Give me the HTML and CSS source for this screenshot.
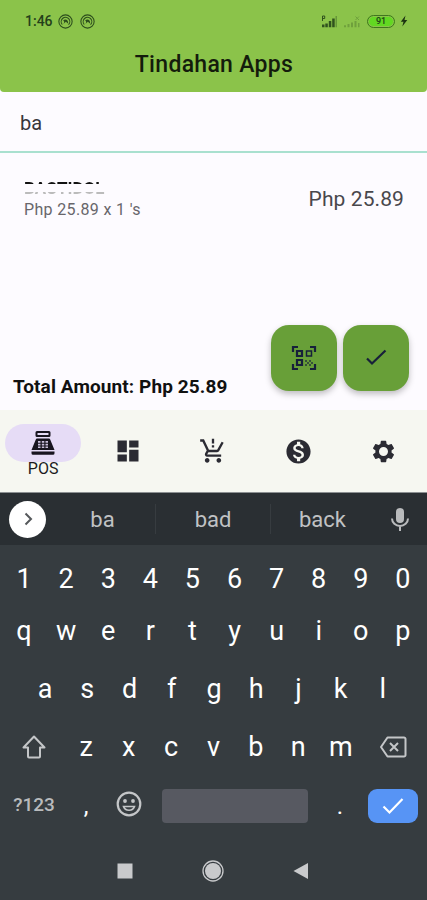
FILE: index.html
```html
<!DOCTYPE html>
<html lang="en">
<head>
  <meta charset="UTF-8" />
  <meta name="viewport" content="width=device-width, initial-scale=1.0"/>
  <title>Tindahan Apps</title>
  <link rel="stylesheet" href="styles.css">
</head>
<body>
  <header class="header">
    <div class="status">
      <span class="time">1:46</span>
      <svg class="swirl" viewBox="0 0 14 14"><circle cx="7" cy="7" r="6.2"/><path d="M4 9.800a4 4 0 1 1 5.800.200"/><path class="core" d="M4.800 6C7 4 9.800 5.500 9.400 8.800L7.300 7.200 5 9.300C6 8 6.200 7 4.800 6z"/></svg>
      <svg class="swirl" viewBox="0 0 14 14"><circle cx="7" cy="7" r="6.2"/><path d="M4 9.800a4 4 0 1 1 5.800.200"/><path class="core" d="M4.800 6C7 4 9.800 5.500 9.400 8.800L7.300 7.200 5 9.300C6 8 6.200 7 4.800 6z"/></svg>
      <div class="status-right">
        <svg class="signal" viewBox="0 0 17 13"><path d="M1 12.2V9.500h2.500v2.700zM4.300 12.200V8.500h2.500v3.700zM7.800 12.200V6h2.500v6.200zM11.200 12.200V3.500h2.500v8.700z"/><path class="faint" d="M14.500 12.200V1H16v11.200z"/><path class="roam" d="M1.500 6V1h2.200v2.500H1.500"/></svg>
        <svg class="signal weak" viewBox="0 0 17 13"><path d="M0 12.200v-2h2v2zM3.500 12.200V9h2v3.200zM7 12.200V7.500h2v4.700zM10.500 12.200V6h2v6.200zM14 12.200V8h1.500v4.200z"/><path class="roam" d="M11.500 1.500l3.500 3.500M15 1.500l-3.500 3.500"/></svg>
        <span class="battery">91</span>
        <svg class="bolt" viewBox="0 0 8 12"><path d="M5.500.5L.8 6.800h2.700L2.300 11.500 7.300 5H4.500z"/></svg>
      </div>
    </div>
    <h1 class="title">Tindahan Apps</h1>
  </header>

  <div class="search">ba</div>

  <main class="content">
    <div class="item">
      <div class="item-info">
        <div class="item-name">BACTIDOL</div>
        <div class="item-qty">Php 25.89 x 1 's</div>
      </div>
      <div class="item-price">Php 25.89</div>
    </div>
    <div class="footer">
      <div class="total">Total Amount: Php 25.89</div>
      <button class="fab">
        <svg width="26" height="26" viewBox="0 0 26 26" fill="none" stroke="#17203a" stroke-width="2.200">
          <path d="M2 7V2h5M19 2h5v5M24 19v5h-5M7 24H2v-5"/>
          <path d="M6 6h5v5H6zM6 15h5v5H6z"/>
          <path d="M15.500 6h5v5h-5z" stroke-width="1.500"/>
          <path d="M14 15h2v2h-2zM18 15h2v2h-2zM16 17h2v2h-2zM20 17h2v2h-2zM14 19h2v2h-2zM18 19h2v2h-2z" fill="#17203a" stroke="none" opacity=".6"/>
        </svg>
      </button>
      <button class="fab">
        <svg width="26" height="26" viewBox="0 0 26 26" fill="none" stroke="#17203a" stroke-width="2.200"><path d="M4 13.500l5 5L22.500 5.500"/></svg>
      </button>
    </div>
  </main>

  <nav class="tabs">
    <a class="tab active">
      <span class="pill">
        <svg width="24" height="26" viewBox="0 0 24 26"><path d="M6 1h12a1.500 1.500 0 0 1 1.500 1.500v3A1.500 1.500 0 0 1 18 7H6a1.500 1.500 0 0 1-1.500-1.500v-3A1.500 1.500 0 0 1 6 1zm.5 2v2h11V3zM6.500 8.500h11c1 0 1.500.5 1.800 1.300L23.500 20H.5L4.700 9.800c.3-.8.800-1.300 1.800-1.300zM.5 21.500h23v1.800a1.500 1.500 0 0 1-1.500 1.500H2a1.500 1.500 0 0 1-1.500-1.500z" fill="#18151f" fill-rule="evenodd"/><path d="M7 11h2.500v1.700H7zM10.800 11h2.500v1.700h-2.500zM14.500 11H17v1.700h-2.500zM7 13.800h2.500v1.700H7zM10.800 13.800h2.500v1.700h-2.500zM14.500 13.800H17v1.700h-2.500zM7 16.500h2.500v1.500H7zM10.800 16.500h2.500v1.500h-2.500zM14.500 16.500H17v1.500h-2.500z" fill="#c9c0dc"/></svg>
      </span>
      <span class="tab-label">POS</span>
    </a>
    <a class="tab"><svg width="28" height="28" viewBox="0 0 24 24"><path d="M3 13h8V3H3v10zm0 8h8v-6H3v6zm10 0h8V11h-8v10zm0-18v6h8V3h-8z"/></svg></a>
    <a class="tab"><svg width="28" height="28" viewBox="0 0 24 24"><path d="M11 9h2V7h-2v2zm0-3.500h2V1.500h-2v4zM7 18c-1.100 0-2 .9-2 2s.9 2 2 2 2-.9 2-2-.9-2-2-2zm10 0c-1.100 0-2 .9-2 2s.9 2 2 2 2-.9 2-2-.9-2-2-2zM8.100 13h7.450c.75 0 1.410-.41 1.750-1.030L21.160 4.960 19.420 4h-.01L15.550 11H8.530L4.270 2H1v2h2l3.600 7.590-1.350 2.440C4.520 15.370 5.480 17 7 17h12v-2H7l1.100-2z"/></svg></a>
    <a class="tab"><svg width="29" height="29" viewBox="0 0 24 24"><path d="M12 2C6.480 2 2 6.480 2 12s4.480 10 10 10 10-4.480 10-10S17.520 2 12 2zm1.410 16.090V20h-2.670v-1.930c-1.710-.36-3.160-1.460-3.270-3.400h1.960c.1 1.050.82 1.870 2.650 1.870 1.960 0 2.400-.98 2.400-1.590 0-.83-.44-1.610-2.670-2.140-2.480-.6-4.180-1.620-4.180-3.670 0-1.720 1.390-2.840 3.110-3.210V4h2.670v1.950c1.860.45 2.790 1.860 2.850 3.390H14.300c-.05-1.110-.64-1.870-2.220-1.870-1.500 0-2.400.68-2.400 1.640 0 .84.65 1.390 2.670 1.910s4.180 1.390 4.180 3.910c-.01 1.830-1.380 2.830-3.120 3.160z"/></svg></a>
    <a class="tab"><svg width="27" height="27" viewBox="0 0 24 24"><path d="M19.140 12.940c.04-.3.060-.61.060-.94 0-.32-.02-.64-.07-.94l2.030-1.580c.18-.14.230-.41.120-.61l-1.920-3.320c-.12-.22-.37-.29-.59-.22l-2.390.96c-.5-.38-1.030-.7-1.620-.94L14.400 2.810c-.04-.24-.24-.41-.48-.41h-3.840c-.24 0-.43.17-.47.41L9.250 5.350c-.59.24-1.130.57-1.620.94l-2.390-.96c-.22-.08-.47 0-.59.22L2.740 8.870c-.12.21-.08.47.12.61l2.030 1.580c-.05.3-.09.63-.09.94s.02.64.070.94l-2.030 1.580c-.18.14-.23.41-.12.61l1.920 3.320c.12.22.37.29.59.22l2.390-.96c.5.38 1.030.7 1.620.94l.36 2.540c.05.24.24.41.48.41h3.840c.24 0 .44-.17.47-.41l.36-2.540c.59-.24 1.130-.56 1.620-.94l2.390.96c.22.08.47 0 .59-.22l1.920-3.320c.12-.22.070-.47-.12-.61l-2.010-1.580zM12 16a4 4 0 1 1 0-8 4 4 0 0 1 0 8z"/></svg></a>
  </nav>

  <div class="keyboard">
    <div class="suggestions">
      <span class="expand"><svg width="16" height="16" viewBox="0 0 16 16" fill="none" stroke="#55585b" stroke-width="2"><path d="M5.500 2.500L11 8l-5.500 5.500"/></svg></span>
      <span class="word">ba</span>
      <span class="word">bad</span>
      <span class="word">back</span>
      <svg class="mic" width="20" height="25" viewBox="0 0 20 25"><rect x="6" y="1" width="8" height="15" rx="4" fill="#b9bbbd"/><path d="M2 11.500a8 7.500 0 0 0 16 0M10 19v5" fill="none" stroke="#b9bbbd" stroke-width="2"/></svg>
    </div>
    <div class="keys numbers">
      <span>1</span><span>2</span><span>3</span><span>4</span><span>5</span><span>6</span><span>7</span><span>8</span><span>9</span><span>0</span>
    </div>
    <div class="keys top-row">
      <span>q</span><span>w</span><span>e</span><span>r</span><span>t</span><span>y</span><span>u</span><span>i</span><span>o</span><span>p</span>
    </div>
    <div class="keys home-row">
      <span>a</span><span>s</span><span>d</span><span>f</span><span>g</span><span>h</span><span>j</span><span>k</span><span>l</span>
    </div>
    <div class="keys bottom-row">
      <span class="wide"><svg width="26" height="26" viewBox="0 0 26 26" fill="none" stroke="#c4c6c8" stroke-width="2" stroke-linejoin="round"><path d="M13 2.500L2.500 13.500H7V22.500a1 1 0 0 0 1 1h10a1 1 0 0 0 1-1V13.500h4.500z"/></svg></span>
      <span>z</span><span>x</span><span>c</span><span>v</span><span>b</span><span>n</span><span>m</span>
      <span class="wide"><svg width="28" height="22" viewBox="0 0 28 22" fill="none" stroke="#c4c6c8" stroke-width="2" stroke-linejoin="round"><path d="M8.500 1.500H25a1.500 1.500 0 0 1 1.500 1.500v16a1.500 1.500 0 0 1-1.500 1.500H8.500L2 11z"/><path d="M11 7l8 8M19 7l-8 8"/></svg></span>
    </div>
    <div class="keys space-row">
      <span class="symbols">?123</span>
      <span class="punct">,</span>
      <span class="emoji"><svg width="26" height="26" viewBox="0 0 26 26" fill="none" stroke="#c4c6c8" stroke-width="2.200"><circle cx="13" cy="13" r="11.300"/><path d="M7.500 15.500h11a5.700 5 0 0 1-11 0z" stroke-width="1.600"/><circle cx="9" cy="10" r="1.900" fill="#c4c6c8" stroke="none"/><circle cx="17" cy="10" r="1.900" fill="#c4c6c8" stroke="none"/></svg></span>
      <span class="space"></span>
      <span class="punct dot">.</span>
      <span class="enter"><svg width="24" height="20" viewBox="0 0 24 20" fill="none" stroke="#fff" stroke-width="2.200"><path d="M2.500 10.500l6 6L21.500 3"/></svg></span>
    </div>
    <div class="system-nav">
      <svg width="16" height="16" viewBox="0 0 16 16"><path d="M.5.500h15v15H.5z"/></svg>
      <svg width="22" height="22" viewBox="0 0 22 22"><circle cx="11" cy="11" r="8"/><circle cx="11" cy="11" r="10" fill="none" stroke="#c9cacc" stroke-width="1.300"/></svg>
      <svg width="16" height="16" viewBox="0 0 16 16"><path d="M15 0v16L.5 8z"/></svg>
    </div>
  </div>
</body>
</html>
```

FILE: styles.css
```css
* {
  box-sizing: border-box;
}

body {
  margin: 0;
  width: 427px;
  height: 900px;
  overflow: hidden;
  font-family: Roboto, "Liberation Sans", sans-serif;
  background-color: #fdfbff;
  display: flex;
  flex-direction: column;
}

.header {
  height: 92px;
  background-color: #8bc34a;
  border-radius: 0 0 4px 4px;
}

.status {
  height: 42px;
  padding: 0 19px 0 25px;
  display: flex;
  align-items: center;
  color: #24401a;
}

.time {
  width: 33px;
  font-size: 14px;
  font-weight: 500;
}

.swirl {
  width: 15px;
  height: 15px;
  margin-right: 7px;
  fill: none;
  stroke: #2c4d1d;
  stroke-width: 1;
}

.swirl .core {
  fill: #2c4d1d;
  stroke: none;
}

.status-right {
  margin-left: auto;
  display: flex;
  align-items: center;
}

.signal {
  width: 17px;
  height: 13px;
  margin-right: 6px;
  fill: #30521e;
}

.signal .faint {
  opacity: 0.4;
}

.signal .roam {
  fill: none;
  stroke: #30521e;
}

.weak {
  opacity: 0.3;
}

.battery {
  width: 28px;
  height: 13px;
  margin-right: 5px;
  border: 1.5px solid #40751f;
  border-radius: 7px;
  background-color: #62d822;
  box-shadow: inset 0 0 0 1px #8bc34a;
  font-size: 9px;
  line-height: 11px;
  font-weight: 500;
  text-align: center;
}

.bolt {
  width: 8px;
  height: 12px;
  fill: #1c3312;
}

.title {
  margin: 0;
  padding-left: 1px;
  line-height: 45px;
  font-size: 23px;
  font-weight: 500;
  letter-spacing: 0.3px;
  text-align: center;
  color: #141c0c;
}

.search {
  height: 61px;
  padding-left: 20px;
  line-height: 63px;
  font-size: 20px;
  color: #38363b;
  border-bottom: 2px solid #a9e0cf;
}

.content {
  height: 257px;
  display: flex;
  flex-direction: column;
  justify-content: space-between;
}

.item {
  display: flex;
  justify-content: space-between;
  padding: 26px 23px 0 24px;
}

/* the name is mostly covered, only two thin strips of it show */
.item-name {
  height: 20px;
  line-height: 19px;
  font-size: 17px;
  font-weight: 700;
  color: transparent;
  background: linear-gradient(#111 5px, transparent 5px, transparent 13px, #bbb 13px);
  background-clip: text;
  -webkit-background-clip: text;
}

.item-qty {
  line-height: 22px;
  font-size: 16px;
  letter-spacing: 0.35px;
  color: #68666b;
}

.item-price {
  padding-top: 8px;
  line-height: 24px;
  font-size: 21px;
  letter-spacing: 0.1px;
  color: #49474c;
}

.footer {
  display: flex;
  align-items: flex-end;
  padding: 0 18px 19px 13px;
  gap: 6px;
}

.total {
  flex: 1;
  margin-bottom: -8px;
  line-height: 24px;
  font-size: 19px;
  font-weight: 700;
  letter-spacing: 0.1px;
  color: #111;
  white-space: nowrap;
}

.fab {
  width: 66px;
  height: 66px;
  padding: 0;
  display: flex;
  align-items: center;
  justify-content: center;
  border: none;
  border-radius: 18px;
  background-color: #689f38;
  box-shadow: 0 3px 6px rgba(0, 0, 0, 0.25);
}

.tabs {
  height: 83px;
  padding-right: 1px;
  display: grid;
  grid-template-columns: repeat(5, 1fr);
  background-color: #f6f7f1;
  border-bottom: 1px solid #8c9092;
}

.tab {
  display: flex;
  align-items: center;
  justify-content: center;
  padding-left: 1px;
  fill: #2b2b33;
}

.active {
  flex-direction: column;
  justify-content: flex-start;
  padding-top: 14px;
}

.pill {
  width: 76px;
  height: 38px;
  display: flex;
  align-items: center;
  justify-content: center;
  border-radius: 19px;
  background-color: #e6dcf6;
}

.tab-label {
  line-height: 14px;
  font-size: 16px;
  color: #1c1b1f;
}

.keyboard {
  flex: 1;
  background-color: #363c40;
  color: #fff;
}

.suggestions {
  height: 52px;
  display: flex;
  align-items: center;
  padding: 0 17px 0 9px;
  background-color: #2a2f33;
}

.expand {
  width: 37px;
  height: 37px;
  display: flex;
  align-items: center;
  justify-content: center;
  border-radius: 50%;
  background-color: #fff;
}

.word {
  width: 115px;
  height: 30px;
  line-height: 32px;
  text-align: center;
  font-size: 22px;
  color: #c0c2c4;
  border-right: 1px solid #373c40;
}

.word:nth-child(2) {
  width: 110px;
  padding-left: 4px;
}

.word:nth-child(4) {
  width: 103px;
  border: none;
}

.mic {
  margin-left: auto;
}

.keys {
  display: flex;
  align-items: center;
  padding: 0 3px;
  font-size: 27px;
}

.keys span {
  flex: 1;
  display: flex;
  align-items: center;
  justify-content: center;
}

.numbers {
  height: 67px;
}

.top-row {
  height: 38px;
}

.home-row {
  height: 77px;
  padding: 0 23px 0 24px;
}

.bottom-row {
  height: 39px;
}

.bottom-row .wide {
  flex: 0 0 62px;
}

.space-row {
  height: 76px;
  padding: 0 9px 0 4px;
}

.space-row span {
  flex: none;
}

.symbols {
  width: 60px;
  font-size: 19px;
  font-weight: 500;
  color: #b9bbbd;
}

.space-row .punct {
  width: 44px;
  padding-top: 4px;
  font-size: 24px;
}

.emoji {
  width: 41px;
}

.space {
  width: 146px;
  height: 34px;
  margin: 3px 0 0 13px;
  border-radius: 4px;
  background-color: #575961;
}

.space-row .dot {
  width: 60px;
  padding-left: 4px;
}

.enter {
  width: 50px;
  height: 34px;
  margin-top: 3px;
  border-radius: 9px;
  background-color: #5794f5;
}

.system-nav {
  display: flex;
  justify-content: space-between;
  align-items: center;
  height: 58px;
  padding: 0 118px 0 117px;
  fill: #c9cacc;
}
```
